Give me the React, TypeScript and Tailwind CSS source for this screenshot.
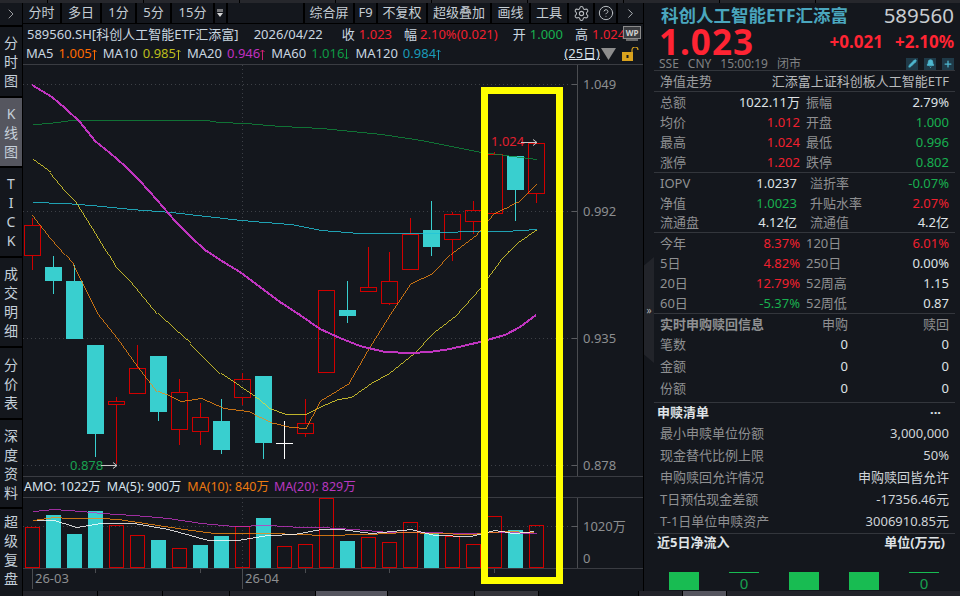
import { Settings, CircleHelp, ChevronRight, Pencil, Bell, Plus } from 'lucide-react';

const RED = '#d00000';
const CYAN = '#39cfcf';

// [left, bodyTop, bodyBottom, wickTop, wickBottom, kind]
const candles: [number, number, number, number, number, string][] = [
    [24, 225, 255, 218, 270, 'r'],
    [45, 267, 281, 256, 294, 'c'],
    [66, 281, 339, 265, 339, 'c'],
    [87, 345, 434, 345, 457, 'c'],
    [108, 401, 404, 397, 464, 'r'],
    [129, 368, 393, 345, 393, 'r'],
    [150, 356, 412, 356, 421, 'c'],
    [171, 392, 429, 379, 445, 'r'],
    [192, 417, 431, 403, 445, 'r'],
    [213, 421, 450, 399, 454, 'c'],
    [234, 379, 397, 373, 405, 'r'],
    [255, 376, 443, 376, 459, 'c'],
    [297, 423, 433, 399, 437, 'r'],
    [318, 290, 372, 290, 372, 'r'],
    [339, 310, 316, 281, 323, 'c'],
    [360, 287, 291, 247, 291, 'r'],
    [381, 281, 303, 252, 305, 'r'],
    [402, 234, 269, 218, 269, 'r'],
    [423, 230, 247, 201, 256, 'c'],
    [444, 214, 239, 212, 261, 'r'],
    [465, 210, 221, 201, 234, 'r'],
    [486, 154, 213, 152, 213, 'r'],
    [507, 156, 190, 156, 221, 'c'],
    [528, 143, 193, 143, 203, 'r'],
];

// [left, top, kind]
const volumes: [number, number, string][] = [
    [25, 527, 'r'], [46, 515, 'c'], [67, 534, 'c'], [88, 511, 'c'], [109, 525, 'r'],
    [130, 535, 'r'], [151, 540, 'c'], [172, 548, 'r'], [193, 545, 'c'], [214, 536, 'c'],
    [235, 526, 'r'], [256, 518, 'c'], [277, 546, 'r'], [298, 544, 'r'], [319, 498, 'r'],
    [340, 541, 'c'], [361, 537, 'r'], [382, 542, 'r'], [403, 522, 'r'], [424, 533, 'c'],
    [445, 536, 'r'], [466, 544, 'r'], [487, 516, 'r'], [508, 530, 'c'], [529, 525, 'r'],
];

const ma60 = '32,124 48,123 70,120 130,120 205,120 217,122 245,123 280,126 320,128 380,134 420,140 480,152 505,155 536,159';
const ma120 = '32,202 64,203 90,205 130,209 170,212 240,220 290,224 320,230 358,233 430,233 465,231 505,231 536,229';
const ma20 = '32,85 52,97 65,108 80,122 95,141 110,153 125,166 140,181 157,200 175,221 190,236 205,250 225,263 240,272 260,287 280,302 300,315 320,329 340,338 360,346 385,352 410,353 430,352 450,349 480,342 505,335 520,327 536,315';
const ma10 = '32,159 50,172 65,190 75,200 95,232 115,265 130,280 157,313 173,328 190,343 220,373 257,398 268,408 285,414 305,414 320,406 337,399 350,397 370,383 388,373 413,353 433,332 455,315 480,287 490,273 500,260 517,242 536,229';
const ma5 = '32,214 50,237 73,263 97,312 117,337 137,365 157,391 170,396 180,401 200,398 223,408 247,411 273,423 290,427 305,428 320,400 325,397 348,383 367,350 390,313 410,283 432,273 452,252 475,235 493,213 517,202 536,183';

const volMa20 = '32,511 53,509 80,511 100,513 133,515 167,518 200,523 233,526 267,525 300,527 320,527 353,529 387,532 420,532 463,533 500,532 536,533';
const volMa10 = '32,520 53,517 67,518 100,518 117,519 150,524 183,529 213,533 267,533 300,534 320,535 367,534 403,532 433,533 470,534 503,531 533,532';
const volMa5 = '36,520 53,520 75,527 100,523 133,523 167,529 207,540 237,540 267,535 293,534 320,529 340,529 370,533 410,529 433,535 470,536 493,530 513,533 533,531';

const priceLevels = [
    { y: 84.5, label: '1.049' },
    { y: 211.5, label: '0.992' },
    { y: 338.5, label: '0.935' },
    { y: 465.5, label: '0.878' },
];

const sideItems = [
    { chars: '分时图', cls: 'h-[71px]' },
    { chars: 'K线图', cls: 'h-[70px] bg-[#55565f]' },
    { chars: 'TICK', cls: 'h-[90px]' },
    { chars: '成交明细', cls: 'h-[90px]' },
    { chars: '分价表', cls: 'h-[72px]' },
    { chars: '深度资料', cls: 'h-[89px]' },
    { chars: '超级复盘', cls: 'h-[84px]' },
];

const leftTools = [
    { label: '分时', cls: 'w-[39px]' },
    { label: '多日', cls: 'w-[40px]' },
    { label: '1分', cls: 'w-[35px]' },
    { label: '5分', cls: 'w-[35px]' },
    { label: '15分', cls: 'w-[43px]' },
];

const rightTools = [
    { label: '综合屏', cls: 'w-[50px]' },
    { label: 'F9', cls: 'w-[23px]' },
    { label: '不复权', cls: 'w-[50px]' },
    { label: '超级叠加', cls: 'w-[64px]' },
    { label: '画线', cls: 'w-[39px]' },
    { label: '工具', cls: 'w-[38px]' },
];

const WHITE = 'text-[#dfe3e6]';
const UP = 'text-[#f0202f]';
const DOWN = 'text-[#18b050]';

type Row = [string, string, string, string, string, string];

const block1: Row[] = [
    ['总额', '1022.11万', WHITE, '振幅', '2.79%', WHITE],
    ['均价', '1.012', UP, '开盘', '1.000', DOWN],
    ['最高', '1.024', UP, '最低', '0.996', DOWN],
    ['涨停', '1.202', UP, '跌停', '0.802', DOWN],
];
const block2: Row[] = [
    ['IOPV', '1.0237', WHITE, '溢折率', '-0.07%', DOWN],
    ['净值', '1.0023', DOWN, '升贴水率', '2.07%', UP],
    ['流通盘', '4.12亿', WHITE, '流通值', '4.2亿', WHITE],
];
const block3: Row[] = [
    ['今年', '8.37%', UP, '120日', '6.01%', UP],
    ['5日', '4.82%', UP, '250日', '0.00%', WHITE],
    ['20日', '12.79%', UP, '52周高', '1.15', WHITE],
    ['60日', '-5.37%', DOWN, '52周低', '0.87', WHITE],
];
const purchase = [
    ['笔数', '0', '0'],
    ['金额', '0', '0'],
    ['份额', '0', '0'],
];
const basket = [
    ['最小申赎单位份额', '3,000,000'],
    ['现金替代比例上限', '50%'],
    ['申购赎回允许情况', '申购赎回皆允许'],
    ['T日预估现金差额', '-17356.46元'],
    ['T-1日单位申赎资产', '3006910.85元'],
];

function Sidebar() {
    return (
        <div className="flex w-[23px] shrink-0 flex-col border-r border-black bg-[#14171d]">
            <div className="flex h-[22px] items-center justify-center text-[#9a9ca0]">
                <ChevronRight size={16} strokeWidth={1.5} />
            </div>
            {sideItems.map((item) => (
                <div
                    key={item.chars}
                    className={`flex flex-col items-center justify-center border-t-2 border-black text-[14px] leading-[19px] text-[#c5d0da] ${item.cls}`}
                >
                    {item.chars.split('').map((c, i) => (
                        <span key={i}>{c}</span>
                    ))}
                </div>
            ))}
        </div>
    );
}

function Toolbar() {
    return (
        <div className="flex h-[21px] items-center border-b border-black text-[13px] text-[#c5cdd4]">
            {leftTools.map((t) => (
                <div key={t.label} className={`flex h-full items-center justify-center border-r-2 border-black ${t.cls}`}>
                    {t.label}
                </div>
            ))}
            <div className="flex h-full w-[13px] items-center justify-center border-r-2 border-black">
                <svg width="7" height="8" viewBox="0 0 7 8" className="text-[#d8d8d8]">
                    <path d="M0 0h6M0 2h6" stroke="currentColor" />
                    <path d="M0 4h6L3 8z" fill="currentColor" />
                </svg>
            </div>
            <div className="flex-1" />
            <div className="h-full border-r-2 border-black" />
            {rightTools.map((t) => (
                <div key={t.label} className={`flex h-full items-center justify-center border-r-2 border-black ${t.cls}`}>
                    {t.label}
                </div>
            ))}
            <div className="flex h-full w-[26px] items-center justify-center border-r-2 border-black text-[#b8bcc0]">
                <Settings size={17} strokeWidth={1.5} />
            </div>
            <div className="flex h-full w-[23px] items-center justify-center border-r-2 border-black text-[#b8bcc0]">
                <CircleHelp size={16} strokeWidth={1.5} />
            </div>
            <div className="flex h-full w-[25px] items-center justify-center text-[#b8bcc0]">
                <ChevronRight size={15} strokeWidth={1.5} />
            </div>
        </div>
    );
}

function TitleRow() {
    return (
        <div className="relative flex h-[20px] items-center overflow-hidden whitespace-nowrap pl-[4px] pt-[2px] text-[13px] text-[#c9d6e0]">
            <span>589560.SH[科创人工智能ETF汇添富]</span>
            <span className="ml-[15px]">2026/04/22</span>
            <span className="ml-[19px]">收</span>
            <span className={`ml-[4px] ${UP}`}>1.023</span>
            <span className="ml-[12px]">幅</span>
            <span className={`ml-[3px] ${UP}`}>2.10%(0.021)</span>
            <span className="ml-[15px]">开</span>
            <span className={`ml-[4px] ${DOWN}`}>1.000</span>
            <span className="ml-[12px]">高</span>
            <span className={`ml-[4px] ${UP}`}>1.024</span>
            {/* WP badge sits on top of the row */}
            <div className="absolute left-[600px] top-[2px] flex flex-col items-center">
                <div className="flex h-[13px] w-[18px] items-center justify-center border border-[#8a8a8a] bg-[#3a3c40] text-[8px] font-bold leading-none text-[#d0d0d0]">
                    WP
                </div>
                <div className="h-[2px] w-[12px] bg-[#6a6a6a]" />
            </div>
        </div>
    );
}

function TrendArrow({ up, color }: { up: boolean; color: string }) {
    return (
        <svg width="5" height="11" viewBox="0 0 5 11" className="block">
            <path d={up ? 'M2.5 11V1M.5 3l2-2 2 2' : 'M2.5 0v10M.5 8l2 2 2-2'} fill="none" stroke={color} />
        </svg>
    );
}

function MaRow() {
    return (
        <div className="flex h-[21px] items-center whitespace-nowrap border-b border-[#3a3c42] pl-[3px] text-[13px] text-[#c9d6e0]">
            <span>MA5</span>
            <span className="ml-[5px] text-[#ff6a00]">1.005</span>
            <TrendArrow up color="#ff6a00" />
            <span className="ml-[6px]">MA10</span>
            <span className="ml-[5px] text-[#bcbc1c]">0.985</span>
            <TrendArrow up color="#bcbc1c" />
            <span className="ml-[6px]">MA20</span>
            <span className="ml-[5px] text-[#c030c0]">0.946</span>
            <TrendArrow up color="#d02070" />
            <span className="ml-[6px]">MA60</span>
            <span className="ml-[5px] text-[#0f9a45]">1.016</span>
            <TrendArrow up={false} color="#0f9a45" />
            <span className="ml-[6px]">MA120</span>
            <span className="ml-[5px] text-[#1a9ab8]">0.984</span>
            <TrendArrow up color="#1a9ab8" />
            <div className="flex-1" />
            <span className="text-[#d8e0e8] underline">(25日)</span>
            <svg width="15" height="12" viewBox="0 0 15 12" className="ml-[1px]">
                <path d="M0 0h15L7.5 12z" fill="#8d8d8d" />
            </svg>
            <svg width="18" height="14" viewBox="0 0 18 14" className="ml-[6px] mr-[3px]">
                <rect x="0" y="5" width="11" height="9" fill="#d9a21e" />
                <rect x="4.5" y="8" width="2" height="3" fill="#14171d" />
                <path d="M10 5V3a3 3 0 0 1 6 0" fill="none" stroke="#d9a21e" strokeWidth="1.2" />
            </svg>
        </div>
    );
}

function CandleChart() {
    return (
        <svg width="620" height="411" viewBox="23 65 620 411" className="block">
            {priceLevels.map((l) => (
                <g key={l.label}>
                    <line x1="23" x2="577" y1={l.y} y2={l.y} stroke="#3d4046" strokeDasharray="1 3" />
                    <line x1="572" x2="578" y1={l.y} y2={l.y} stroke="#5a5c60" />
                    <text x="583" y={l.y + 4.5} fontSize="13" fill="#8c8e90">{l.label}</text>
                </g>
            ))}
            <line x1="242.5" x2="242.5" y1="65" y2="476" stroke="#3d4046" strokeDasharray="1 3" />
            <line x1="577.5" x2="577.5" y1="65" y2="476" stroke="#4a4c50" />

            {candles.map(([x, top, bottom, wt, wb, kind]) => {
                const cx = x + 8.5;
                const color = kind === 'r' ? RED : CYAN;
                return (
                    <g key={x} shapeRendering="crispEdges">
                        <line x1={cx} x2={cx} y1={wt} y2={top} stroke={color} />
                        <line x1={cx} x2={cx} y1={bottom} y2={wb} stroke={color} />
                        {kind === 'r' ? (
                            <rect x={x + 0.5} y={top + 0.5} width="16" height={bottom - top} fill="none" stroke={color} />
                        ) : (
                            <rect x={x} y={top} width="17" height={bottom - top} fill={color} />
                        )}
                    </g>
                );
            })}
            {/* doji */}
            <g stroke="#ffffff" shapeRendering="crispEdges">
                <line x1="284.5" x2="284.5" y1="421" y2="459" />
                <line x1="276" x2="293" y1="443.5" y2="443.5" />
            </g>

            <g fill="none" shapeRendering="crispEdges" strokeWidth="0.8" transform="translate(0.5 0.5)">
                <polyline points={ma60} stroke="#0f8a3c" />
                <polyline points={ma120} stroke="#22c4d8" />
                <polyline points={ma10} stroke="#e8dc30" />
                <polyline points={ma5} stroke="#f58a12" />
            </g>
            <polyline points={ma20} fill="none" stroke="#c035c0" strokeWidth="2" shapeRendering="crispEdges" />

            <text x="491" y="146" fontSize="13" fill="#e0202f">1.024</text>
            <path d="M521 142.5h16m-4-3 4 3-4 3" fill="none" stroke="#c8c8c8" />
            <text x="70" y="470" fontSize="13" fill="#18a050">0.878</text>
            <path d="M101 465.5h16m-4-3 4 3-4 3" fill="none" stroke="#c8c8c8" />
        </svg>
    );
}

function AmoRow() {
    return (
        <div className="flex h-[22px] items-center whitespace-nowrap border-y border-[#3a3c42] pl-[1px] text-[12.5px] text-[#d8e4ee]">
            <span>AMO: 1022万</span>
            <span className="ml-[6px]">MA(5): 900万</span>
            <span className="ml-[6px] text-[#ee7a10]">MA(10): 840万</span>
            <span className="ml-[5px] text-[#b838c0]">MA(20): 829万</span>
        </div>
    );
}

function VolumeChart() {
    return (
        <svg width="620" height="92" viewBox="23 498 620 92" className="block">
            <line x1="23" x2="577" y1="526.5" y2="526.5" stroke="#3d4046" strokeDasharray="1 3" />
            <line x1="242.5" x2="242.5" y1="498" y2="568" stroke="#3d4046" strokeDasharray="1 3" />
            <line x1="577.5" x2="577.5" y1="498" y2="568" stroke="#4a4c50" />
            <line x1="23" x2="643" y1="568.5" y2="568.5" stroke="#3a3c42" />

            {volumes.map(([x, top, kind]) =>
                kind === 'r' ? (
                    <rect key={x} x={x + 0.5} y={top + 0.5} width="14" height={567 - top} fill="none" stroke={RED} shapeRendering="crispEdges" />
                ) : (
                    <rect key={x} x={x} y={top} width="15" height={568 - top} fill={CYAN} />
                )
            )}

            <g fill="none" shapeRendering="crispEdges" strokeWidth="0.8" transform="translate(0.5 0.5)">
                <polyline points={volMa20} stroke="#c035c0" />
                <polyline points={volMa10} stroke="#f58a12" />
                <polyline points={volMa5} stroke="#ffffff" />
            </g>

            <line x1="572" x2="578" y1="526.5" y2="526.5" stroke="#5a5c60" />
            <text x="583" y="531" fontSize="13" fill="#8c8e90">1020万</text>
            <text x="583" y="563" fontSize="13" fill="#8c8e90">0</text>

            {[95.5, 200.5, 305.5, 389.5, 494.5].map((x) => (
                <line key={x} x1={x} x2={x} y1="569" y2="573" stroke="#4a4c50" />
            ))}
            <line x1="32.5" x2="32.5" y1="569" y2="589" stroke="#4a4c50" />
            <line x1="242.5" x2="242.5" y1="569" y2="589" stroke="#4a4c50" />
            <text x="35" y="583" fontSize="13" fill="#8c8e90">26-03</text>
            <text x="245" y="583" fontSize="13" fill="#8c8e90">26-04</text>
        </svg>
    );
}

function QuoteRows({ rows, offset }: { rows: Row[]; offset: boolean }) {
    return (
        <div className="border-b border-[#33363c] px-[6px]">
            {rows.map(([a, b, bc, c, d, dc]) => (
                <div key={a} className={offset ? 'grid h-[19.5px] grid-cols-[139px_150px] items-center pt-[1px]' : 'grid h-[20px] grid-cols-[140px_149px] items-center pt-[1px]'}>
                    <div className="flex justify-between">
                        <span className="text-[#8f9092]">{a}</span>
                        <span className={`${bc} ${offset ? 'mr-[2px]' : ''}`}>{b}</span>
                    </div>
                    <div className={offset ? 'flex justify-between pl-[11px]' : 'flex justify-between pl-[6px]'}>
                        <span className="text-[#8f9092]">{c}</span>
                        <span className={dc}>{d}</span>
                    </div>
                </div>
            ))}
        </div>
    );
}

function RightPanel() {
    return (
        <div className="flex w-[306px] shrink-0 flex-col pr-[5px] text-[13px]">
            {/* header */}
            <div className="h-[68px] border-b border-[#33363c] pl-[7px] pr-[1px] pt-[1px]">
                <div className="flex h-[24px] items-center justify-between pb-[2px]">
                    <span className="text-[17.5px] font-bold leading-[22px] text-[#4aa6be]">科创人工智能ETF汇添富</span>
                    <span className="text-[20.5px] leading-[22px] text-[#c8ccd0]">589560</span>
                </div>
                <div className="flex h-[29px] items-center justify-between pb-[1px]">
                    <span className="-ml-[2px] text-[35px] font-bold leading-[28px] tracking-[1px] text-[#ff2433]">1.023</span>
                    <div className="flex gap-[12px] text-[17px] font-bold leading-[22px] text-[#ff2433]">
                        <span>+0.021</span>
                        <span>+2.10%</span>
                    </div>
                </div>
                <div className="flex h-[13px] items-center justify-between text-[12px] leading-[13px] text-[#808284]">
                    <div className="-ml-[2px] flex gap-[9px]">
                        <span>SSE</span>
                        <span>CNY</span>
                        <span>15:00:19</span>
                        <span>闭市</span>
                    </div>
                    <div className="flex gap-[6px] text-[#4fb8d0]">
                        <div className="flex h-[12px] w-[12px] items-center justify-center bg-[#1f3a48]"><Pencil size={9} fill="currentColor" /></div>
                        <div className="flex h-[12px] w-[12px] items-center justify-center bg-[#1f3a48]"><Bell size={9} fill="currentColor" /></div>
                        <div className="flex h-[12px] w-[12px] items-center justify-center bg-[#1f3a48]"><Plus size={10} strokeWidth={3} /></div>
                    </div>
                </div>
            </div>

            <div className="flex h-[21px] items-center justify-between border-b border-[#33363c] px-[6px] pt-[1px] text-[#9a9c9e]">
                <span>净值走势</span>
                <span className="text-[#b8babc]">汇添富上证科创板人工智能ETF</span>
            </div>

            <QuoteRows rows={block1} offset={false} />
            <QuoteRows rows={block2} offset={true} />
            <QuoteRows rows={block3} offset={false} />

            {/* purchase and redemption */}
            <div className="border-b border-[#33363c] px-[6px] pb-[2px]">
                <div className="grid h-[20px] grid-cols-[1fr_70px_101px] items-center pt-[1px] text-right text-[#8f9092]">
                    <span className="text-left font-bold">实时申购赎回信息</span>
                    <span>申购</span>
                    <span>赎回</span>
                </div>
                {purchase.map(([a, b, c]) => (
                    <div key={a} className="grid h-[22px] grid-cols-[1fr_70px_101px] items-center pt-[1px] text-right">
                        <span className="text-left text-[#8f9092]">{a}</span>
                        <span className={WHITE}>{b}</span>
                        <span className={WHITE}>{c}</span>
                    </div>
                ))}
            </div>

            {/* basket */}
            <div className="border-b border-[#33363c] px-[6px]">
                <div className="flex h-[20px] items-center justify-between pt-[1px] font-bold text-[#dfe3e6]">
                    <span className="-ml-[3px]">申赎清单</span>
                    <span className="mr-[8px]">···</span>
                </div>
                {basket.map(([a, b]) => (
                    <div key={a} className="flex h-[22px] items-center justify-between pt-[1px]">
                        <span className="text-[#8f9092]">{a}</span>
                        <span className="text-[#d0d4d8]">{b}</span>
                    </div>
                ))}
            </div>

            <div className="flex h-[18px] items-center justify-between pl-[3px] pr-[10px] font-bold text-[#dfe3e6]">
                <span>近5日净流入</span>
                <span>单位(万元)</span>
            </div>

            {/* net inflow */}
            <div className="mt-[20.5px] flex gap-[30px] pl-[15px]">
                <div className="h-[18px] w-[30px] bg-[#18bc52]" />
                <div className="h-[19px] w-[30px] border-t border-[#18bc52] pt-[3px] text-center text-[15px] leading-[15px] text-[#18a050]">0</div>
                <div className="h-[18px] w-[30px] bg-[#18bc52]" />
                <div className="h-[18px] w-[30px] bg-[#18bc52]" />
                <div className="h-[19px] w-[30px] border-t border-[#18bc52] pt-[3px] text-center text-[15px] leading-[15px] text-[#18a050]">0</div>
            </div>
        </div>
    );
}

function Gutter() {
    return (
        <div className="flex w-[11px] shrink-0 items-center border-l border-black pt-[26px]">
            <div className="flex h-[106px] w-[11px] items-center justify-center bg-[#22242a] text-[10px] text-[#b0b0b0] [clip-path:polygon(0_8%,100%_0,100%_100%,0_92%)]">
                »
            </div>
        </div>
    );
}

function StripCell({ cls }: { cls: string }) {
    return <div className={`h-full border-r border-black ${cls}`} />;
}

export default function App() {
    return (
        <div className="flex h-[596px] w-[960px] flex-col overflow-hidden bg-[#14171d] [font-family:'Noto_Sans','Noto_Sans_CJK_SC',sans-serif]">
            {/* top tab strip */}
            <div className="flex h-[3px] shrink-0 bg-[#26272c]">
                <StripCell cls="w-[48px]" />
                <StripCell cls="w-[96px]" />
                <StripCell cls="w-[96px]" />
                <StripCell cls="w-[96px]" />
                <StripCell cls="w-[96px]" />
                <StripCell cls="w-[96px]" />
                <StripCell cls="w-[96px]" />
                <StripCell cls="w-[96px]" />
                <StripCell cls="w-[96px]" />
            </div>

            <div className="relative flex h-[588px] shrink-0">
                <Sidebar />
                <div className="flex w-[620px] shrink-0 flex-col">
                    <Toolbar />
                    <TitleRow />
                    <MaRow />
                    <CandleChart />
                    <AmoRow />
                    <VolumeChart />
                </div>
                <Gutter />
                <RightPanel />

                {/* highlight box drawn over the chart */}
                <div className="absolute left-[481px] top-[84px] h-[497px] w-[82px] border-[7px] border-[#ffff00]" />
            </div>

            {/* bottom tab strip */}
            <div className="flex h-[5px] shrink-0 bg-[#22232a]">
                <StripCell cls="w-[23px] bg-[#14171d]" />
                <StripCell cls="w-[75px]" />
                <StripCell cls="w-[65px]" />
                <StripCell cls="w-[67px]" />
                <StripCell cls="w-[86px]" />
                <StripCell cls="w-[72px] bg-[#55555f]" />
                <StripCell cls="w-[87px]" />
                <StripCell cls="w-[64px] bg-[#33343a]" />
                <StripCell cls="w-[100px] bg-[#14171d]" />
                <StripCell cls="w-[44px] bg-[#22232a]" />
                <StripCell cls="w-[44px] bg-[#55555f]" />
                <div className="h-full flex-1 bg-[#22232a]" />
            </div>
        </div>
    );
}
